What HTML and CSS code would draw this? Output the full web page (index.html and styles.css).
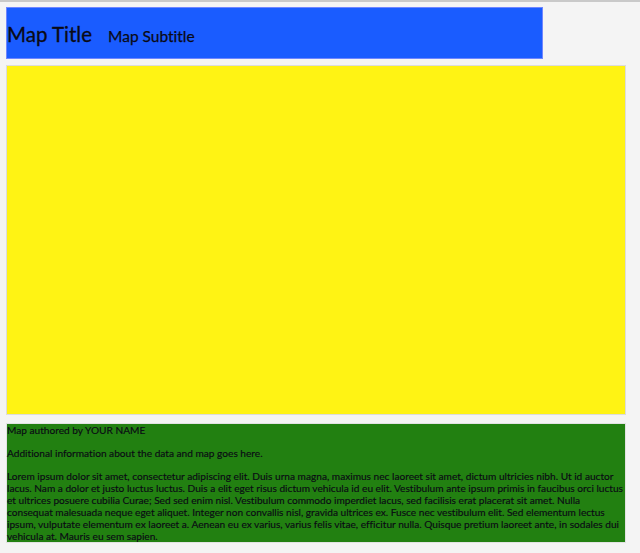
FILE: index.html
```html
<!DOCTYPE html>
<html>
<head>
<meta charset="utf-8">
<link rel="stylesheet" href="styles.css">
</head>
<body>
<div class="page">
  <header class="header">
    <h1 class="title">Map Title</h1>
    <h2 class="subtitle">Map Subtitle</h2>
  </header>
  <div class="map"></div>
  <footer class="info">
    <p>Map authored by YOUR NAME</p>
    <p>Additional information about the data and map goes here.</p>
    <p>Lorem ipsum dolor sit amet, consectetur adipiscing elit. Duis urna magna, maximus nec laoreet sit amet, dictum ultricies nibh. Ut id auctor lacus. Nam a dolor et justo luctus luctus. Duis a elit eget risus dictum vehicula id eu elit. Vestibulum ante ipsum primis in faucibus orci luctus et ultrices posuere cubilia Curae; Sed sed enim nisl. Vestibulum commodo imperdiet lacus, sed facilisis erat placerat sit amet. Nulla consequat malesuada neque eget aliquet. Integer non convallis nisl, gravida ultrices ex. Fusce nec vestibulum elit. Sed elementum lectus ipsum, vulputate elementum ex laoreet a. Aenean eu ex varius, varius felis vitae, efficitur nulla. Quisque pretium laoreet ante, in sodales dui vehicula at. Mauris eu sem sapien.</p>
  </footer>
</div>
</body>
</html>
```

FILE: styles.css
```css
html, body {
  margin: 0;
  padding: 0;
}
body {
  background: #f4f4f4;
  border-top: 2px solid #c9c9c9;
  font-family: Lato, "Open Sans", sans-serif;
  font-variant-ligatures: none;
  color: #0a0a14;
  height: 551px;
  overflow: hidden;
}
.page {
  width: 620px;
  padding: 5px 0 0 6px;
  display: flex;
  flex-direction: column;
}
.header {
  width: 535px;
  height: 50px;
  background: #1a5cff;
  border: 1px solid #6f86ff;
  display: flex;
  align-items: baseline;
  box-sizing: content-box;
}
.title {
  margin: 13px 0 0 0;
  font-size: 20.5px;
  font-weight: 400;
  line-height: 26px;
  -webkit-text-stroke: 0.3px #0a0a14;
}
.subtitle {
  margin: 0 0 0 16px;
  font-size: 15.5px;
  font-weight: 400;
  line-height: 20px;
  -webkit-text-stroke: 0.25px #0a0a14;
}
.map {
  margin-top: 6px;
  height: 348px;
  background: #fff314;
  border: 1px solid #dcdcdc;
}
.info {
  margin-top: 8px;
  background: #228011;
  border: 1px solid #e2e2e2;
  font-size: 10.15px;
  line-height: 12px;
  -webkit-text-stroke: 0.15px #0a0a14;
}
.info p {
  margin: 11px 0 0 0;
}
.info p:first-child {
  margin-top: 0;
}
```
